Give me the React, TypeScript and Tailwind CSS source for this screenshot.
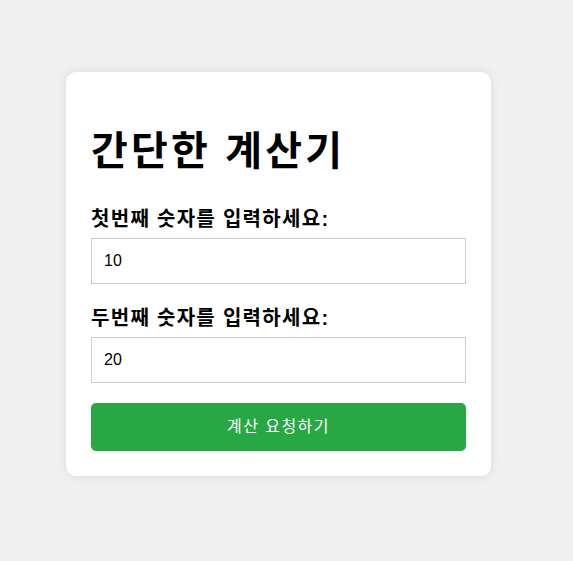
import { useState } from "react";

export default function App() {
  const [first, setFirst] = useState("10");
  const [second, setSecond] = useState("20");

  return (
    <main className="min-h-[561px] bg-[#f0f0f0] pt-[72px] font-['Liberation_Sans','Noto_Sans_CJK_KR',sans-serif] text-black">
      <div className="ml-[66px] w-[425px] rounded-[10px] bg-white p-[25px] shadow-[0_0_10px_rgba(0,0,0,0.1)]">
        <h1 className="mt-[25px] mb-[25px] text-[40px] leading-[58px] font-bold tracking-[0.08em]">
          간단한 계산기
        </h1>

        <form className="flex flex-col" onSubmit={(e) => e.preventDefault()}>
          <label htmlFor="num1" className="mb-1 text-[20px] leading-[29px] font-bold tracking-[0.065em]">
            첫번째 숫자를 입력하세요:
          </label>
          <input
            id="num1"
            type="number"
            value={first}
            onChange={(e) => setFirst(e.target.value)}
            className="h-[46px] w-full border border-[#ccc] px-3 text-[16px] outline-none"
          />

          <label htmlFor="num2" className="mt-5 mb-1 text-[20px] leading-[29px] font-bold tracking-[0.065em]">
            두번째 숫자를 입력하세요:
          </label>
          <input
            id="num2"
            type="number"
            value={second}
            onChange={(e) => setSecond(e.target.value)}
            className="h-[46px] w-full border border-[#ccc] px-3 text-[16px] outline-none"
          />

          <button
            type="submit"
            className="mt-5 h-[48px] w-full rounded-[5px] bg-[#28a745] text-[16px] tracking-[0.09em] text-white"
          >
            계산 요청하기
          </button>
        </form>
      </div>
    </main>
  );
}
